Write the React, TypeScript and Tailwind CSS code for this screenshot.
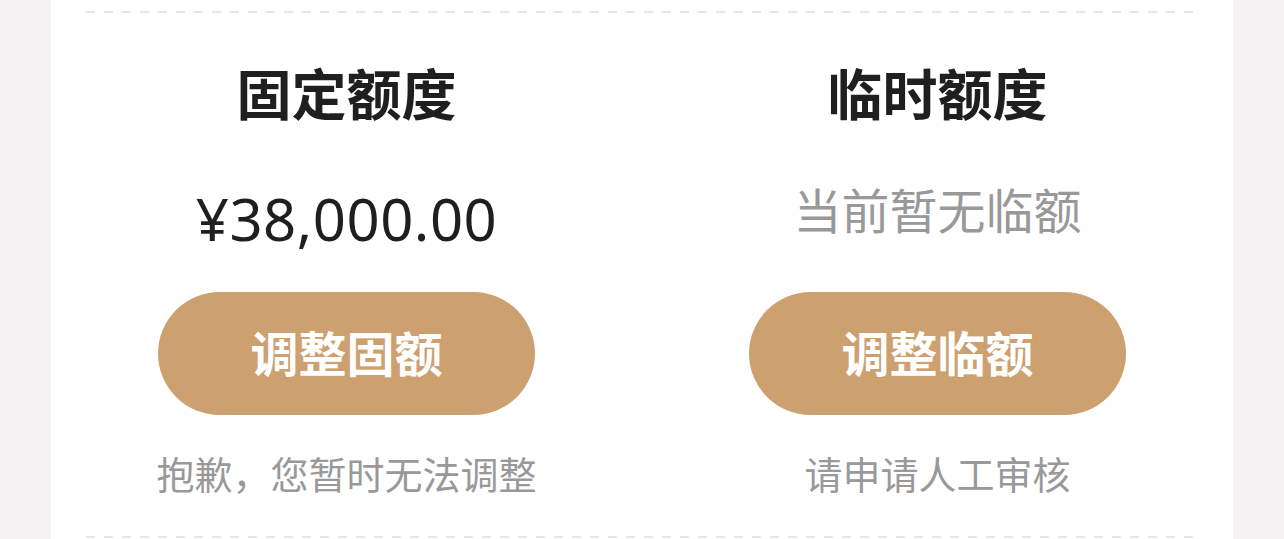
import React from "react";

const dashed =
  "h-[2px] mx-[35px] bg-[repeating-linear-gradient(to_right,#e6e6e6_0_9px,transparent_9px_18px)]";

type QuotaProps = {
  title: string;
  value: React.ReactNode;
  button: string;
  note: string;
};

const QuotaColumn = ({ title, value, button, note }: QuotaProps) => {
  return (
    <div className="flex flex-col items-center">
      <div className="mt-[49px] h-[64px] leading-[64px] text-[55px] font-bold text-[#1f1f1f]">
        {title}
      </div>
      <div className="mt-[52px] h-[80px] flex items-center justify-center">{value}</div>
      <button className="mt-[34px] w-[377px] h-[123px] rounded-full bg-[#cda070] text-white text-[48px] font-bold leading-none">
        {button}
      </button>
      <div className="mt-[35px] h-[48px] leading-[48px] text-[38px] text-[#999999]">{note}</div>
    </div>
  );
};

export default function App() {
  return (
    <div className="w-full h-[539px] bg-[#f5f3f3] px-[51px] overflow-hidden font-['Noto_Sans','Noto_Sans_CJK_SC',sans-serif]">
      <div className="h-full bg-white flex flex-col">
        <div className={"mt-[11px] " + dashed} />
        <div className="grid grid-cols-2 flex-1">
          <QuotaColumn
            title="固定额度"
            value={
              <span className="text-[58px] text-[#1f1f1f] tracking-[0.5px]">
                ¥38,000.00
              </span>
            }
            button="调整固额"
            note="抱歉，您暂时无法调整"
          />
          <QuotaColumn
            title="临时额度"
            value={<span className="text-[48px] text-[#999999] -mt-[14px]">当前暂无临额</span>}
            button="调整临额"
            note="请申请人工审核"
          />
        </div>
        <div className={"mb-[1px] " + dashed} />
      </div>
    </div>
  );
}
